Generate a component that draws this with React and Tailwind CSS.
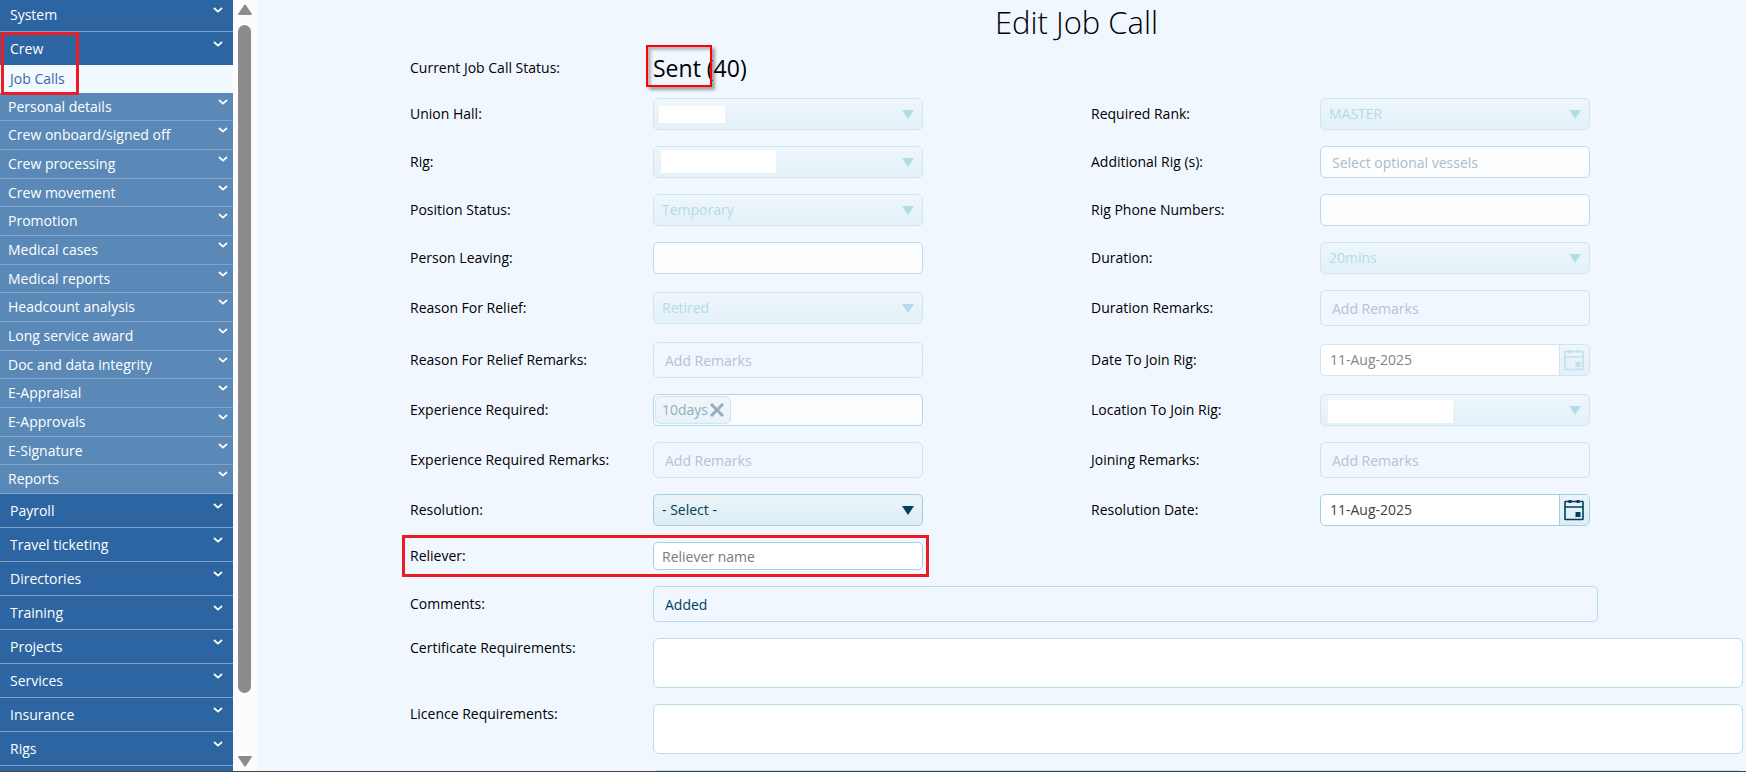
import { useId, useState } from "react";
import clsx from "clsx";

const crewItems = [
  "Personal details",
  "Crew onboard/signed off",
  "Crew processing",
  "Crew movement",
  "Promotion",
  "Medical cases",
  "Medical reports",
  "Headcount analysis",
  "Long service award",
  "Doc and data integrity",
  "E-Appraisal",
  "E-Approvals",
  "E-Signature",
  "Reports",
];

const modules = [
  "Payroll",
  "Travel ticketing",
  "Directories",
  "Training",
  "Projects",
  "Services",
  "Insurance",
  "Rigs",
];

function Chevron() {
  return (
    <svg width="10" height="6" viewBox="0 0 10 6" fill="none" stroke="currentColor" strokeWidth="1.7" className="shrink-0">
      <path d="M1 1l4 3.6L9 1" />
    </svg>
  );
}

function CalendarIcon() {
  return (
    <svg width="20" height="22" viewBox="0 0 20 22" fill="none">
      <rect x="1" y="2.5" width="18" height="18" rx="0.5" stroke="currentColor" strokeWidth="1.6" />
      <path d="M1 8h18" stroke="currentColor" strokeWidth="1.6" />
      <path d="M4.5 1h3v3h-3zM12.5 1h3v3h-3zM11.5 13h5v5h-5z" fill="currentColor" />
    </svg>
  );
}

function ModuleButton({ children, open }) {
  return (
    <button
      type="button"
      className={clsx(
        "flex w-full items-start justify-between bg-[#2c65a1] pt-[9px] pr-2.5 pl-2.5 text-left leading-4 text-white",
        open ? "h-[33px]" : "h-[34px] border-b border-[#7da4cd]"
      )}
    >
      {children}
      <Chevron />
    </button>
  );
}

function Sidebar() {
  return (
    <nav className="relative w-[233px] shrink-0 overflow-hidden bg-[#2c65a1]">
      <div className="-mt-0.5">
        <ModuleButton>System</ModuleButton>
        <ModuleButton open>Crew</ModuleButton>
        <a href="#job-calls" className="flex h-7 items-center bg-[#f2faff] pl-2.5 text-[#38699f]">
          Job Calls
        </a>
        <ul>
          {crewItems.map((item) => (
            <li key={item} className="h-[29px] border-b border-[#7fa5cd] bg-[#5a89b8] nth-[3n+1]:h-7">
              <button type="button" className="flex w-full items-start justify-between pt-1.5 pr-[5px] pl-2 text-left leading-4 text-white">
                {item}
                <Chevron />
              </button>
            </li>
          ))}
        </ul>
        {modules.map((item) => (
          <ModuleButton key={item}>{item}</ModuleButton>
        ))}
      </div>
      <div className="pointer-events-none absolute top-8 left-px h-[63px] w-[78px] border-3 border-[#ed1c24]" />
    </nav>
  );
}

function Scrollbar() {
  return (
    <div className="flex w-6 shrink-0 flex-col items-center bg-[#fcfcfc] pt-1 pr-px pb-1">
      <svg width="16" height="12" viewBox="0 0 16 12" fill="#8b8b8b">
        <path d="M7 1.2Q8 0 9 1.2L14.6 9.4Q15.4 11 13.8 11H2.2Q.6 11 1.4 9.4z" />
      </svg>
      <div className="mt-[9px] mb-[62px] w-[13px] grow rounded-full bg-[#8b8b8b]" />
      <svg width="16" height="12" viewBox="0 0 16 12" fill="#8b8b8b">
        <path d="M7 10.8Q8 12 9 10.8L14.6 2.6Q15.4 1 13.8 1H2.2Q.6 1 1.4 2.6z" />
      </svg>
    </div>
  );
}

// label on the left, control on the right
function Field({ label, right, top, id, children }) {
  return (
    <div className={clsx("flex min-w-0", top ? "items-start" : "items-center")}>
      <label htmlFor={id} className={clsx("shrink-0 text-black", right ? "w-[229px]" : "w-[243px]")}>
        {label}
      </label>
      {children}
    </div>
  );
}

function SelectField({ label, right, value, disabled = true, mask }) {
  const id = useId();
  return (
    <Field label={label} right={right} id={id}>
      <div className={clsx("relative w-[270px]", disabled ? "text-[#b4dbea]" : "text-[#003f5e]")}>
        <select
          id={id}
          disabled={disabled}
          className={clsx(
            "block h-8 w-full appearance-none rounded-[5px] border bg-linear-to-b pr-8 pl-2 opacity-100",
            disabled ? "border-[#cfe6f1] from-[#eef6fb] to-[#e3f1f8]" : "border-[#a3cfe2] from-[#ebf4f8] to-[#ddedf4]"
          )}
        >
          <option>{value}</option>
        </select>
        {mask && <div className={clsx("absolute bg-white", mask)} />}
        <svg width="12" height="9" viewBox="0 0 12 9" fill="currentColor" className="pointer-events-none absolute top-3 right-[9px]">
          <path d="M0 0h12L6 9z" />
        </svg>
      </div>
    </Field>
  );
}

function TextField({ label, right, placeholder, className }) {
  const id = useId();
  return (
    <Field label={label} right={right} id={id}>
      <input
        id={id}
        type="text"
        placeholder={placeholder}
        className={clsx("w-[270px] rounded-[5px] border", className || "h-8 border-[#b9dcea] bg-[#fcfdff] px-[11px] placeholder:text-[#a9bdca]")}
      />
    </Field>
  );
}

function RemarksField({ label, right }) {
  return (
    <TextField
      label={label}
      right={right}
      placeholder="Add Remarks"
      className="h-9 border-[#cfe6f1] bg-[#f0f7ff] px-[11px] placeholder:text-[#b1c5d2]"
    />
  );
}

function DateField({ label, disabled }) {
  const id = useId();
  const [date, setDate] = useState("11-Aug-2025");
  return (
    <Field label={label} right id={id}>
      <div className={clsx("flex h-8 w-[270px] overflow-hidden rounded-[5px] border bg-white", disabled ? "border-[#cfe6f1]" : "border-[#a3cfe2]")}>
        <input
          id={id}
          type="text"
          value={date}
          disabled={disabled}
          onChange={(e) => setDate(e.target.value)}
          className={clsx("min-w-0 grow px-[9px]", disabled ? "text-[#858585]" : "text-[#424242]")}
        />
        <button
          type="button"
          aria-label="Open calendar"
          disabled={disabled}
          className={clsx(
            "flex w-[30px] shrink-0 items-center justify-center border-l bg-linear-to-b pr-px",
            disabled ? "border-[#cfe6f1] from-[#eef6fb] to-[#e3f1f8] text-[#bfe0ed]" : "border-[#a3cfe2] from-[#ebf4f8] to-[#ddedf4] text-[#003f5e]"
          )}
        >
          <CalendarIcon />
        </button>
      </div>
    </Field>
  );
}

function ExperienceField() {
  return (
    <Field label="Experience Required:" id="experience">
      <div className="flex h-8 w-[270px] items-center rounded-[5px] border border-[#b0d8e8] bg-[#fcfdff] px-px">
        <span className="flex h-7 shrink-0 items-center gap-0.5 rounded-[5px] border border-[#cfe6f1] bg-linear-to-b from-[#f0f6fa] to-[#e8f3f9] px-1.5 text-[#94adb9]">
          10days
          <button type="button" aria-label="Remove 10days">
            <svg width="14" height="14" viewBox="0 0 14 14" fill="none" stroke="currentColor" strokeWidth="3">
              <path d="M1 1l12 12M13 1L1 13" />
            </svg>
          </button>
        </span>
        <input id="experience" type="text" className="min-w-0 grow" />
      </div>
    </Field>
  );
}

function AreaField({ label }) {
  const id = useId();
  return (
    <Field label={label} id={id} top>
      <textarea id={id} className="block h-[50px] min-w-0 grow resize-none rounded-[6px] border border-[#b9dcea] bg-white p-2" />
    </Field>
  );
}

export default function App() {
  return (
    <div className="flex h-screen overflow-hidden border-b border-[#444] bg-[#f0f7ff] font-['Open_Sans',sans-serif] text-[14px] leading-5">
      <Sidebar />
      <Scrollbar />
      <main className="min-w-0 grow pr-[3px] pl-[153px]">
        <h1 className="mb-2.5 text-center text-[31px] leading-[44px] font-light text-black">Edit Job Call</h1>

        <form className="flex flex-col gap-4">
          <div className="flex h-7 items-center">
            <span className="w-[243px] shrink-0 text-black">Current Job Call Status:</span>
            <output className="relative text-[23px] text-black">
              Sent (40)
              <span className="pointer-events-none absolute -top-[13px] -left-[7px] h-[42px] w-[66px] border-2 border-[#ff0000] shadow-[3px_3px_3px_rgba(0,0,0,0.35),inset_3px_3px_3px_rgba(0,0,0,0.25)]" />
            </output>
          </div>

          <div className="grid grid-cols-[681fr_652fr] gap-y-4">
            <SelectField label="Union Hall:" value="" mask="top-2 left-1.5 h-[17px] w-[66px]" />
            <SelectField label="Required Rank:" value="MASTER" right />
            <SelectField label="Rig:" value="" mask="top-1 left-2 h-[23px] w-[115px]" />
            <TextField label="Additional Rig (s):" placeholder="Select optional vessels" right />
            <SelectField label="Position Status:" value="Temporary" />
            <TextField label="Rig Phone Numbers:" right />
            <TextField label="Person Leaving:" />
            <SelectField label="Duration:" value="20mins" right />
            <SelectField label="Reason For Relief:" value="Retired" />
            <RemarksField label="Duration Remarks:" right />
            <RemarksField label="Reason For Relief Remarks:" />
            <DateField label="Date To Join Rig:" disabled />
            <ExperienceField />
            <SelectField label="Location To Join Rig:" value="" mask="top-1.5 left-2 h-[23px] w-[125px]" right />
            <RemarksField label="Experience Required Remarks:" />
            <RemarksField label="Joining Remarks:" right />
            <SelectField label="Resolution:" value="- Select -" disabled={false} />
            <DateField label="Resolution Date:" />
            <div className="relative">
              <TextField
                label="Reliever:"
                placeholder="Reliever name"
                className="h-7 border-[#a3cfe2] bg-white px-2 placeholder:text-[#7b7b7b]"
              />
              <div className="pointer-events-none absolute -top-[7px] -left-2 h-[42px] w-[527px] border-3 border-[#ed1c24]" />
            </div>
          </div>

          <Field label="Comments:" id="comments">
            <input
              id="comments"
              type="text"
              defaultValue="Added"
              className="h-9 w-[945px] min-w-0 rounded-[5px] border border-[#b9dcea] bg-[#f0f7ff] px-[11px] text-[#003f5e]"
            />
          </Field>
          <AreaField label="Certificate Requirements:" />
          <AreaField label="Licence Requirements:" />
          <AreaField label="" />
        </form>
      </main>
    </div>
  );
}
